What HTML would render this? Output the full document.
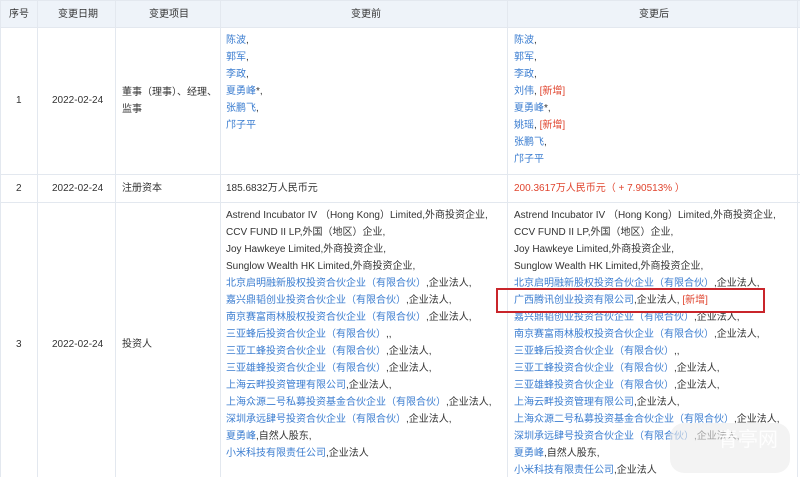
<!DOCTYPE html>
<html><head><meta charset="utf-8"><style>
body{margin:0;width:800px;height:477px;overflow:hidden;background:#fff;font-family:"Liberation Sans","Noto Sans CJK SC",sans-serif;font-size:10px;color:#333;position:relative}
.v{position:absolute;top:0;bottom:0;width:1px;background:#e3e8ef}
.h{position:absolute;left:0;right:0;height:1px;background:#e3e8ef}
.t{position:absolute;white-space:nowrap;line-height:17px}
a{color:#3b7dd0;text-decoration:none}
.r{color:#e0452f}
.hd{position:absolute;left:0;top:0;width:800px;height:27px;background:#eef3f9}
</style></head><body>
<div class="hd"></div>
<div class="v" style="left:0"></div><div class="v" style="left:37px"></div><div class="v" style="left:115px"></div><div class="v" style="left:220px"></div><div class="v" style="left:507px"></div><div class="v" style="left:797px"></div>
<div class="h" style="top:0"></div><div class="h" style="top:27px"></div><div class="h" style="top:174px"></div><div class="h" style="top:202px"></div>
<div class="t" style="left:9px;top:6px">序号</div>
<div class="t" style="left:58px;top:6px">变更日期</div>
<div class="t" style="left:149px;top:6px">变更项目</div>
<div class="t" style="left:351px;top:6px">变更前</div>
<div class="t" style="left:639px;top:6px">变更后</div>

<div class="t" style="left:16px;top:92px">1</div>
<div class="t" style="left:52px;top:92px">2022-02-24</div>
<div class="t" style="left:122px;top:84px;line-height:17px">董事（理事）、经理、<br>监事</div>
<div class="t" style="left:226px;top:32px"><a>陈波</a>,<br><a>郭军</a>,<br><a>李政</a>,<br><a>夏勇峰</a>*,<br><a>张鹏飞</a>,<br><a>邝子平</a></div>
<div class="t" style="left:514px;top:32px"><a>陈波</a>,<br><a>郭军</a>,<br><a>李政</a>,<br><a>刘伟</a>, <span class="r">[新增]</span><br><a>夏勇峰</a>*,<br><a>姚瑶</a>, <span class="r">[新增]</span><br><a>张鹏飞</a>,<br><a>邝子平</a></div>

<div class="t" style="left:16px;top:180px">2</div>
<div class="t" style="left:52px;top:180px">2022-02-24</div>
<div class="t" style="left:122px;top:180px">注册资本</div>
<div class="t" style="left:226px;top:180px">185.6832万人民币元</div>
<div class="t r" style="left:514px;top:180px">200.3617万人民币元（ + 7.90513% ）</div>

<div class="t" style="left:16px;top:336px">3</div>
<div class="t" style="left:52px;top:336px">2022-02-24</div>
<div class="t" style="left:122px;top:336px">投资人</div>
<div class="t" style="left:226px;top:207px">Astrend Incubator IV （Hong Kong）Limited,外商投资企业,<br>CCV FUND II LP,外国（地区）企业,<br>Joy Hawkeye Limited,外商投资企业,<br>Sunglow Wealth HK Limited,外商投资企业,<br><a>北京启明融新股权投资合伙企业（有限合伙）</a>,企业法人,<br><a>嘉兴鼎韬创业投资合伙企业（有限合伙）</a>,企业法人,<br><a>南京赛富雨林股权投资合伙企业（有限合伙）</a>,企业法人,<br><a>三亚蜂后投资合伙企业（有限合伙）</a>,,<br><a>三亚工蜂投资合伙企业（有限合伙）</a>,企业法人,<br><a>三亚雄蜂投资合伙企业（有限合伙）</a>,企业法人,<br><a>上海云畔投资管理有限公司</a>,企业法人,<br><a>上海众源二号私募投资基金合伙企业（有限合伙）</a>,企业法人,<br><a>深圳承远肆号投资合伙企业（有限合伙）</a>,企业法人,<br><a>夏勇峰</a>,自然人股东,<br><a>小米科技有限责任公司</a>,企业法人</div>
<div class="t" style="left:514px;top:207px">Astrend Incubator IV （Hong Kong）Limited,外商投资企业,<br>CCV FUND II LP,外国（地区）企业,<br>Joy Hawkeye Limited,外商投资企业,<br>Sunglow Wealth HK Limited,外商投资企业,<br><a>北京启明融新股权投资合伙企业（有限合伙）</a>,企业法人,<br><a>广西腾讯创业投资有限公司</a>,企业法人, <span class="r">[新增]</span><br><a>嘉兴鼎韬创业投资合伙企业（有限合伙）</a>,企业法人,<br><a>南京赛富雨林股权投资合伙企业（有限合伙）</a>,企业法人,<br><a>三亚蜂后投资合伙企业（有限合伙）</a>,,<br><a>三亚工蜂投资合伙企业（有限合伙）</a>,企业法人,<br><a>三亚雄蜂投资合伙企业（有限合伙）</a>,企业法人,<br><a>上海云畔投资管理有限公司</a>,企业法人,<br><a>上海众源二号私募投资基金合伙企业（有限合伙）</a>,企业法人,<br><a>深圳承远肆号投资合伙企业（有限合伙）</a>,企业法人,<br><a>夏勇峰</a>,自然人股东,<br><a>小米科技有限责任公司</a>,企业法人</div>
<div style="position:absolute;left:496px;top:288px;width:265px;height:21px;border:2px solid #c9252b"></div>
<div style="position:absolute;left:670px;top:423px;width:120px;height:50px;border-radius:14px;background:rgba(235,235,235,0.6)"></div>
<div class="t" style="left:718px;top:428px;font-size:20px;color:rgba(255,255,255,0.9);line-height:24px">青亭网</div>
</body></html>
